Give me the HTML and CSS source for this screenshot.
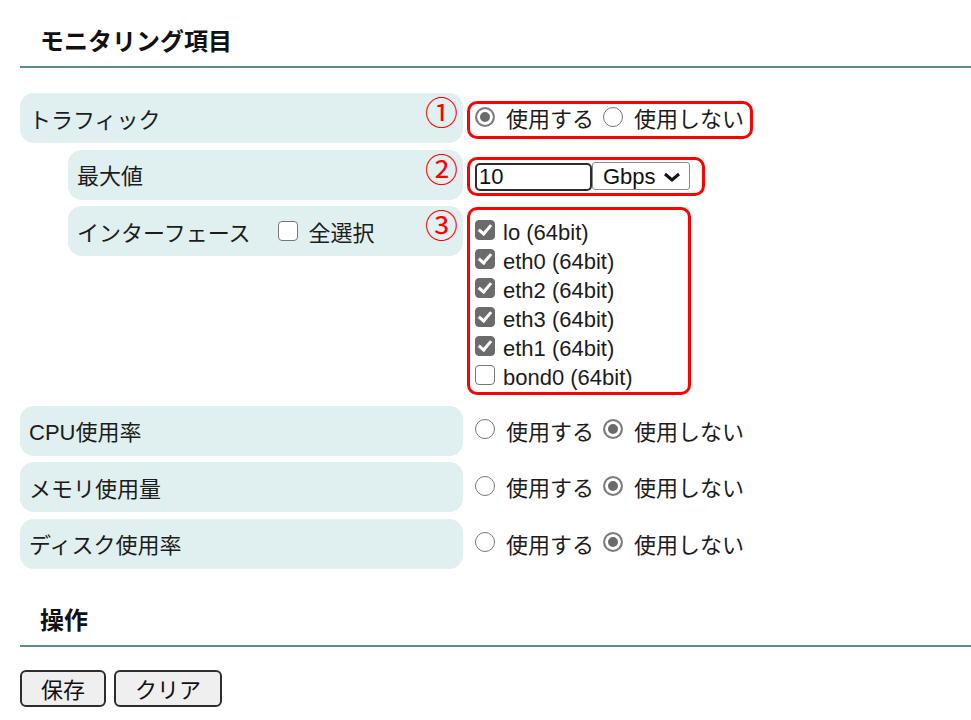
FILE: index.html
```html
<!DOCTYPE html>
<html lang="ja">

<head>
    <meta charset="UTF-8">
    <meta name="viewport" content="width=device-width, initial-scale=1.0">
    <title>モニタリング設定</title>
    <link rel="stylesheet" href="styles.css">
</head>

<body>

    <div class="page">
        <h2 class="title">モニタリング項目</h2>

        <div class="items">
            <div class="row">
                <div class="label">トラフィック<span class="num">①</span></div>
                <div class="value">
                    <div class="opts mark">
                        <label class="opt"><input type="radio" name="traffic" checked>使用する</label>
                        <label class="opt"><input type="radio" name="traffic">使用しない</label>
                    </div>
                </div>
            </div>

            <div class="row sub">
                <div class="label">最大値<span class="num">②</span></div>
                <div class="value">
                    <div class="opts mark wide">
                        <input type="text" class="maxval" value="10">
                        <span class="unit">
                            <select>
                                <option>Gbps</option>
                                <option>Mbps</option>
                            </select>
                            <svg class="chev" width="18" height="10" viewBox="0 0 18 10"><path d="M2 2 L9 8 L16 2" fill="none" stroke="#111" stroke-width="3"/></svg>
                        </span>
                    </div>
                </div>
            </div>

            <div class="row sub">
                <div class="label">インターフェース<label class="all"><input type="checkbox">全選択</label><span class="num">③</span></div>
                <div class="value top">
                    <div class="opts mark list">
                        <label class="chk"><input type="checkbox" checked>lo (64bit)</label>
                        <label class="chk"><input type="checkbox" checked>eth0 (64bit)</label>
                        <label class="chk"><input type="checkbox" checked>eth2 (64bit)</label>
                        <label class="chk"><input type="checkbox" checked>eth3 (64bit)</label>
                        <label class="chk"><input type="checkbox" checked>eth1 (64bit)</label>
                        <label class="chk"><input type="checkbox">bond0 (64bit)</label>
                    </div>
                </div>
            </div>

            <div class="row">
                <div class="label">CPU使用率</div>
                <div class="value">
                    <div class="opts">
                        <label class="opt"><input type="radio" name="cpu">使用する</label>
                        <label class="opt"><input type="radio" name="cpu" checked>使用しない</label>
                    </div>
                </div>
            </div>

            <div class="row">
                <div class="label">メモリ使用量</div>
                <div class="value">
                    <div class="opts">
                        <label class="opt"><input type="radio" name="mem">使用する</label>
                        <label class="opt"><input type="radio" name="mem" checked>使用しない</label>
                    </div>
                </div>
            </div>

            <div class="row">
                <div class="label">ディスク使用率</div>
                <div class="value">
                    <div class="opts">
                        <label class="opt"><input type="radio" name="disk">使用する</label>
                        <label class="opt"><input type="radio" name="disk" checked>使用しない</label>
                    </div>
                </div>
            </div>
        </div>

        <h2 class="title second">操作</h2>

        <div class="buttons">
            <button class="btn">保存</button>
            <button class="btn">クリア</button>
        </div>
    </div>

</body>

</html>
```

FILE: styles.css
```css
body {
    margin: 0;
    font-family: "Liberation Sans", "Noto Sans CJK JP", sans-serif;
    font-size: 22px;
    line-height: 28px;
    color: #1c1c1c;
    background: #fff;
}

.page {
    padding: 25px 0 0 20px;
}

.title {
    margin: 0;
    padding: 0 20px 7px 20px;
    font-size: 24px;
    line-height: 34px;
    font-weight: bold;
    color: #111;
    border-bottom: 2px solid #5b8a91;
}

.title.second {
    margin-top: 35px;
}

.items {
    display: flex;
    flex-direction: column;
    gap: 6.5px;
    margin-top: 25px;
}

.row {
    display: grid;
    grid-template-columns: 443px 1fr;
    column-gap: 4px;
}

.label {
    display: flex;
    align-items: center;
    height: 50px;
    box-sizing: border-box;
    padding: 5px 5px 0 9px;
    background-color: #e0efef;
    border-radius: 14px;
}

.row.sub .label {
    margin-left: 48px;
}

.num {
    margin-left: auto;
    align-self: flex-start;
    margin-top: -3px;
    font-family: "Noto Sans CJK JP", sans-serif;
    font-size: 33px;
    line-height: 33px;
    color: #f00;
}

.value {
    display: flex;
    align-items: center;
    padding-top: 4px;
}

.value.top {
    align-items: flex-start;
    padding-top: 0;
}

.opts {
    display: inline-flex;
    align-items: center;
    border: 3px solid transparent;
    border-radius: 10px;
    padding: 2px 6px 2px 5px;
}

.opts.mark {
    border-color: #f00;
}

.opts.wide {
    padding: 2px 12px 2px 5px;
}

.opt {
    display: flex;
    align-items: center;
}

.opt + .opt {
    margin-left: 9px;
}

input[type="radio"] {
    appearance: none;
    flex-shrink: 0;
    width: 20px;
    height: 20px;
    box-sizing: border-box;
    margin: 0 11px 7px 0;
    border: 1.5px solid #767676;
    border-radius: 50%;
    background: #fff;
}

input[type="radio"]:checked {
    border: 2px solid #7d7d7d;
    background: #6a6a6a;
    box-shadow: inset 0 0 0 3px #fff;
}

input[type="checkbox"] {
    appearance: none;
    flex-shrink: 0;
    position: relative;
    width: 20px;
    height: 20px;
    box-sizing: border-box;
    margin: 0 8px 6px 0;
    border: 1.5px solid #767676;
    border-radius: 4px;
    background: #fff;
}

input[type="checkbox"]:checked {
    border-color: #6b6b6b;
    background: #6b6b6b;
}

input[type="checkbox"]:checked::after {
    content: "";
    position: absolute;
    left: 5px;
    top: 1px;
    width: 5px;
    height: 10px;
    border-right: 3px solid #fff;
    border-bottom: 3px solid #fff;
    transform: rotate(40deg);
}

.all {
    display: flex;
    align-items: center;
    margin-left: 27px;
}

.all input[type="checkbox"] {
    margin-right: 11px;
}

.list {
    flex-direction: column;
    align-items: flex-start;
    width: 224px;
    box-sizing: border-box;
    margin: 1px 0 4px 0;
    padding: 8px 6px 0 5px;
}

.chk {
    display: flex;
    align-items: center;
    height: 29px;
}

.maxval {
    width: 117px;
    height: 28px;
    box-sizing: border-box;
    margin: 0;
    padding: 0 2px;
    font-family: "Liberation Sans", sans-serif;
    font-size: 22px;
    color: #111;
    border: 2px solid #2b2b2b;
    border-radius: 5px;
}

.unit {
    position: relative;
    display: inline-block;
}

.unit select {
    appearance: none;
    width: 98px;
    height: 28px;
    box-sizing: border-box;
    margin: 0;
    padding: 0 0 0 10px;
    font-family: "Liberation Sans", sans-serif;
    font-size: 22px;
    color: #111;
    background: #fff;
    border: 1px solid #8a8a8a;
    border-radius: 3px;
}

.chev {
    position: absolute;
    right: 9px;
    top: 10px;
    pointer-events: none;
}

.buttons {
    display: flex;
    gap: 8px;
    margin-top: 23px;
}

.btn {
    height: 37px;
    padding: 0 19px;
    font-family: "Noto Sans CJK JP", sans-serif;
    font-size: 22px;
    line-height: 28px;
    color: #111;
    background-color: #efefef;
    border: 2px solid #2e2e2e;
    border-radius: 6px;
    cursor: pointer;
}
```
